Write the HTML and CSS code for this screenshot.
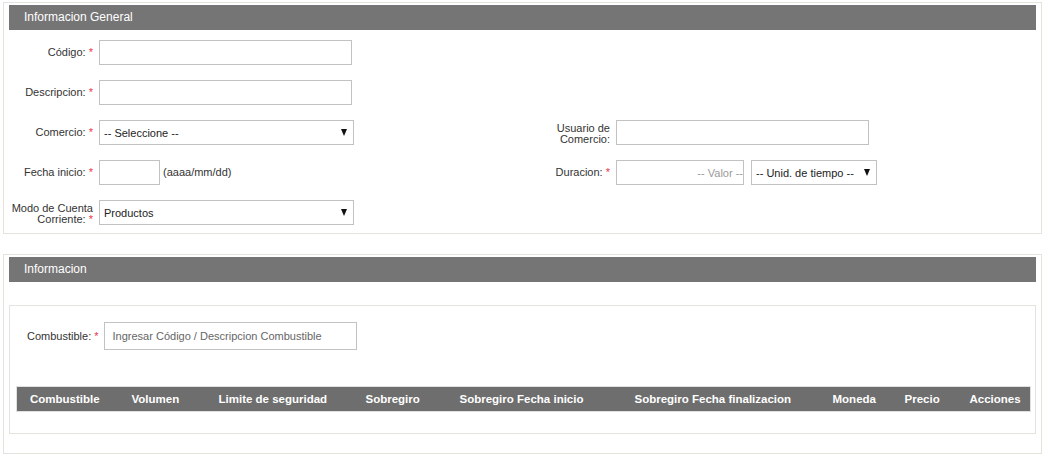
FILE: index.html
```html
<!DOCTYPE html>
<html lang="es">
<head>
<meta charset="utf-8">
<title>Informacion General</title>
<link rel="stylesheet" href="styles.css">
</head>
<body>
<section class="panel panel-general">
  <header class="panel-head">Informacion General</header>
  <div class="form-grid">
    <label class="lbl r1"><span>Código: <span class="req">*</span></span></label>
    <div class="fld r1"><input class="txt w252" type="text"></div>

    <label class="lbl r2"><span>Descripcion: <span class="req">*</span></span></label>
    <div class="fld r2"><input class="txt w252" type="text"></div>

    <label class="lbl r3"><span>Comercio: <span class="req">*</span></span></label>
    <div class="fld r3"><span class="sel w255"><select><option>-- Seleccione --</option></select></span></div>
    <label class="lbl lbl-two lbl-right r3"><span class="lines"><span class="ln">Usuario de</span><span class="ln">Comercio:</span></span></label>
    <div class="fld fld-right r3"><input class="txt w252" type="text"></div>

    <label class="lbl r4"><span>Fecha inicio: <span class="req">*</span></span></label>
    <div class="fld r4"><input class="txt w60" type="text"><span class="hint">(aaaa/mm/dd)</span></div>
    <label class="lbl lbl-right r4"><span>Duracion: <span class="req">*</span></span></label>
    <div class="fld fld-right r4 dur">
      <input class="txt w128 valor" type="text" placeholder="-- Valor --">
      <span class="sel w126"><select><option>-- Unid. de tiempo --</option></select></span>
    </div>

    <label class="lbl lbl-two r5"><span class="lines"><span class="ln">Modo de Cuenta</span><span class="ln">Corriente: <span class="req">*</span></span></span></label>
    <div class="fld r5"><span class="sel w255"><select><option>Productos</option></select></span></div>
  </div>
</section>

<section class="panel panel-info">
  <header class="panel-head">Informacion</header>
  <div class="inner-box">
    <div class="comb-row">
      <label class="lbl-comb">Combustible: <span class="req">*</span></label>
      <input class="txt comb-input" type="text" placeholder="Ingresar Código / Descripcion Combustible">
    </div>
    <table class="grid">
      <colgroup>
        <col class="c1"><col class="c2"><col class="c3"><col class="c4"><col class="c5"><col class="c6"><col class="c7"><col class="c8"><col class="c9">
      </colgroup>
      <thead>
        <tr>
          <th>Combustible</th>
          <th>Volumen</th>
          <th>Limite de seguridad</th>
          <th>Sobregiro</th>
          <th>Sobregiro Fecha inicio</th>
          <th>Sobregiro Fecha finalizacion</th>
          <th>Moneda</th>
          <th>Precio</th>
          <th>Acciones</th>
        </tr>
      </thead>
    </table>
  </div>
</section>
</body>
</html>
```

FILE: styles.css
```css
* { box-sizing: border-box; }

body {
  margin: 0;
  padding: 2px 0 0 3px;
  background: #ffffff;
  font-family: "Liberation Sans", Arial, sans-serif;
  font-size: 11px;
  color: #333333;
}

.panel {
  width: 1039px;
  border: 1px solid #e4e4dc;
  padding: 2px 5px 0 5px;
  background: #fff;
}

.panel-general { height: 232px; }

.panel-info {
  margin-top: 20px;
  height: 200px;
}

.panel-head {
  height: 25px;
  background: #757575;
  color: #ffffff;
  font-size: 12px;
  line-height: 25px;
  padding-left: 15px;
}

.form-grid {
  margin-top: 10px;
  display: grid;
  grid-template-columns: 84px 440px 65px 1fr;
  grid-auto-rows: 25px;
  column-gap: 6px;
  row-gap: 15px;
}

.r1 { grid-row: 1; }
.r2 { grid-row: 2; }
.r3 { grid-row: 3; }
.r4 { grid-row: 4; }
.r5 { grid-row: 5; }

.lbl {
  grid-column: 1;
  display: flex;
  align-items: center;
  justify-content: flex-end;
  text-align: right;
  line-height: 13px;
  color: #333;
}

.lbl-two { align-items: flex-end; }

.lines {
  display: flex;
  flex-direction: column;
  align-items: flex-end;
  white-space: nowrap;
}
.ln { display: block; line-height: 11px; }

.fld {
  grid-column: 2;
  display: flex;
  align-items: center;
}

.lbl-right { grid-column: 3; }
.fld-right { grid-column: 4; }

.req { color: #e8354a; }

.txt {
  height: 25px;
  border: 1px solid #c2c2c2;
  background: #fff;
  font-family: inherit;
  font-size: 11px;
  color: #333;
  padding: 0 4px;
  outline: none;
}

.w252 { width: 253px; }
.w60 { width: 61px; }
.w128 { width: 128px; }

.hint {
  margin-left: 3px;
  margin-top: -2px;
  color: #333;
}

.valor { text-align: right; padding-right: 0; }
.valor::placeholder { color: #9a9a9a; }

.dur { gap: 7px; }

.sel {
  position: relative;
  display: inline-block;
  height: 25px;
}
.sel select {
  appearance: none;
  -webkit-appearance: none;
  width: 100%;
  height: 25px;
  border: 1px solid #c2c2c2;
  background: #fff;
  font-family: inherit;
  font-size: 11px;
  color: #222;
  padding: 0 0 0 4px;
  border-radius: 0;
  outline: none;
}
.sel::after {
  content: "";
  position: absolute;
  right: 7px;
  top: 9px;
  border-left: 3.5px solid transparent;
  border-right: 3.5px solid transparent;
  border-top: 7px solid #111;
  pointer-events: none;
}
.w255 { width: 255px; }
.w126 { width: 126px; }

.inner-box {
  margin-top: 23px;
  border: 1px solid #e4e4dc;
  height: 129px;
  padding: 16px 6px 0 6px;
}

.comb-row {
  display: flex;
  align-items: center;
  gap: 5px;
  padding-left: 11px;
}

.lbl-comb { color: #333; }

.comb-input {
  width: 253px;
  height: 28px;
  padding-left: 8px;
}
.comb-input::placeholder { color: #666; }

.grid {
  margin-top: 36px;
  width: 1014px;
  border-collapse: collapse;
  table-layout: fixed;
  border: 1px solid #e0e0e0;
}

.grid th {
  height: 25px;
  background: #6e6e6e;
  color: #fff;
  font-size: 11.5px;
  font-weight: bold;
  text-align: left;
  padding: 0 0 0 13px;
  white-space: nowrap;
}

.c1 { width: 102px; }
.c2 { width: 87px; }
.c3 { width: 147px; }
.c4 { width: 94px; }
.c5 { width: 175px; }
.c6 { width: 198px; }
.c7 { width: 72px; }
.c8 { width: 65px; }
.c9 { width: 74px; }
```
